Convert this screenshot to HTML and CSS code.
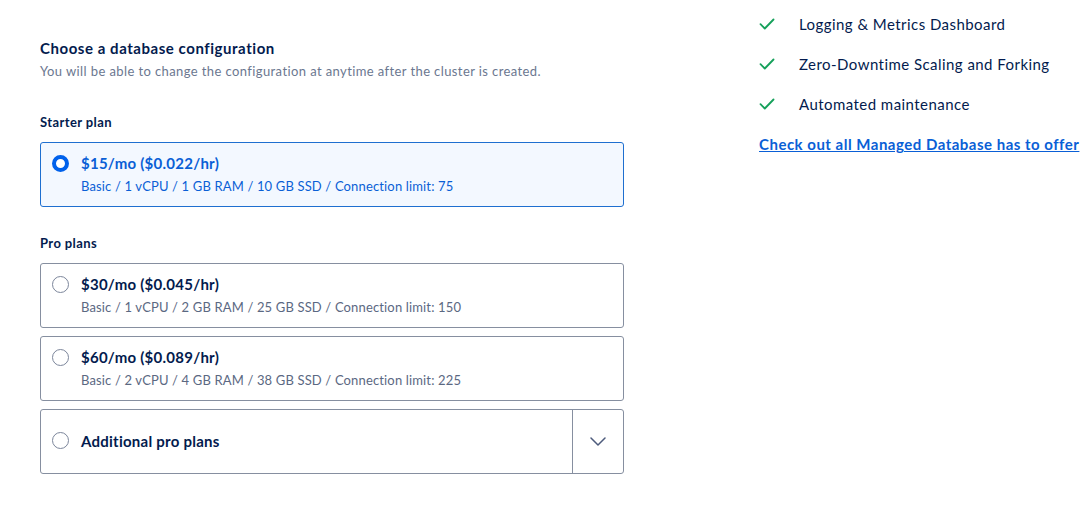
FILE: index.html
```html
<!DOCTYPE html>
<html lang="en">
<head>
<meta charset="utf-8">
<title>Choose a database configuration</title>
<link rel="stylesheet" href="styles.css">
</head>
<body>
<div class="page">
  <section class="config">
    <h2 class="title">Choose a database configuration</h2>
    <p class="lead">You will be able to change the configuration at anytime after the cluster is created.</p>

    <h3 class="group">Starter plan</h3>
    <label class="plan selected">
      <span class="radio"></span>
      <span class="plan-body">
        <span class="price">$15/mo ($0.022/hr)</span>
        <span class="spec">Basic / 1 vCPU / 1 GB RAM / 10 GB SSD / Connection limit: 75</span>
      </span>
    </label>

    <h3 class="group pro">Pro plans</h3>
    <div class="plans">
      <label class="plan">
        <span class="radio"></span>
        <span class="plan-body">
          <span class="price">$30/mo ($0.045/hr)</span>
          <span class="spec">Basic / 1 vCPU / 2 GB RAM / 25 GB SSD / Connection limit: 150</span>
        </span>
      </label>
      <label class="plan">
        <span class="radio"></span>
        <span class="plan-body">
          <span class="price">$60/mo ($0.089/hr)</span>
          <span class="spec">Basic / 2 vCPU / 4 GB RAM / 38 GB SSD / Connection limit: 225</span>
        </span>
      </label>
      <div class="plan more">
        <span class="more-main">
          <span class="radio"></span>
          <span class="price">Additional pro plans</span>
        </span>
        <span class="more-toggle">
          <svg width="16" height="9" viewBox="0 0 16 9"><path d="M1 1l7 7 7-7" fill="none" stroke="#4d5b7c" stroke-width="1.5" stroke-linecap="round" stroke-linejoin="round"/></svg>
        </span>
      </div>
    </div>
  </section>

  <aside class="features">
    <ul class="list">
      <li><svg class="check" width="16" height="12" viewBox="0 0 16 12"><path d="M1.5 6.2l4.3 4.3L14.5 1.5" fill="none" stroke="#15a05a" stroke-width="1.8" stroke-linecap="round" stroke-linejoin="round"/></svg>Logging &amp; Metrics Dashboard</li>
      <li><svg class="check" width="16" height="12" viewBox="0 0 16 12"><path d="M1.5 6.2l4.3 4.3L14.5 1.5" fill="none" stroke="#15a05a" stroke-width="1.8" stroke-linecap="round" stroke-linejoin="round"/></svg>Zero-Downtime Scaling and Forking</li>
      <li><svg class="check" width="16" height="12" viewBox="0 0 16 12"><path d="M1.5 6.2l4.3 4.3L14.5 1.5" fill="none" stroke="#15a05a" stroke-width="1.8" stroke-linecap="round" stroke-linejoin="round"/></svg>Automated maintenance</li>
    </ul>
    <a class="offer" href="#">Check out all Managed Database has to offer</a>
  </aside>
</div>
</body>
</html>
```

FILE: styles.css
```css
html, body {
  margin: 0;
  padding: 0;
  background: #ffffff;
  overflow: hidden;
}
body {
  font-family: Lato, "Liberation Sans", sans-serif;
  color: #031b4e;
  width: 1080px;
  height: 522px;
}
.page {
  display: flex;
  align-items: flex-start;
  padding-left: 40px;
}
.config {
  width: 584px;
  flex: none;
  padding-top: 38px;
}
.title {
  margin: 0;
  font-size: 15px;
  line-height: 20px;
  font-weight: 700;
  letter-spacing: 0.55px;
}
.lead {
  margin: 4px 0 0;
  font-size: 13px;
  line-height: 18px;
  color: #6b7790;
  letter-spacing: 0.4px;
}
.group {
  margin: 33px 0 11px;
  font-size: 13px;
  line-height: 18px;
  font-weight: 700;
  letter-spacing: 0.4px;
}
.group.pro {
  margin-top: 27px;
}
.plans {
  display: flex;
  flex-direction: column;
  gap: 8px;
}
.plan {
  display: flex;
  align-items: flex-start;
  box-sizing: border-box;
  height: 65px;
  border: 1px solid #868fa0;
  border-radius: 3px;
  padding: 10px 16px 0 11px;
  background: #fff;
}
.radio {
  flex: none;
  box-sizing: border-box;
  width: 17px;
  height: 17px;
  border-radius: 50%;
  border: 1px solid #7c869b;
  background: #fff;
  margin-top: 2px;
  margin-right: 12px;
}
.plan-body {
  display: flex;
  flex-direction: column;
  gap: 4px;
}
.price {
  font-size: 15px;
  line-height: 20px;
  font-weight: 700;
  color: #031b4e;
  letter-spacing: 0.25px;
}
.spec {
  font-size: 13px;
  line-height: 18px;
  color: #5b6882;
  letter-spacing: 0.15px;
}
.plan.selected {
  background: #f3f8ff;
  border-color: #1e6fd0;
}
.plan.selected .radio {
  border: 4px solid #0061eb;
}
.plan.selected .price,
.plan.selected .spec {
  color: #0a5fd6;
}
.plan.more {
  padding: 0;
  align-items: stretch;
}
.more-main {
  flex: 1;
  display: flex;
  align-items: center;
  padding-left: 11px;
  padding-bottom: 2px;
}
.more-main .radio {
  margin-top: 0;
}
.more-toggle {
  flex: none;
  width: 50px;
  border-left: 1px solid #868fa0;
  display: flex;
  align-items: center;
  justify-content: center;
}
.features {
  margin-left: 135px;
  padding-top: 14px;
  white-space: nowrap;
  flex: none;
}
.list {
  list-style: none;
  margin: 0;
  padding: 0;
}
.list li {
  display: flex;
  align-items: center;
  font-size: 15px;
  line-height: 20px;
  margin-bottom: 20px;
  letter-spacing: 0.45px;
}
.check {
  margin: 0 24px 0 0;
  flex: none;
}
.offer {
  display: block;
  font-size: 15px;
  line-height: 20px;
  font-weight: 700;
  color: #0a5fd6;
  text-decoration: underline;
  letter-spacing: 0.5px;
}
```
